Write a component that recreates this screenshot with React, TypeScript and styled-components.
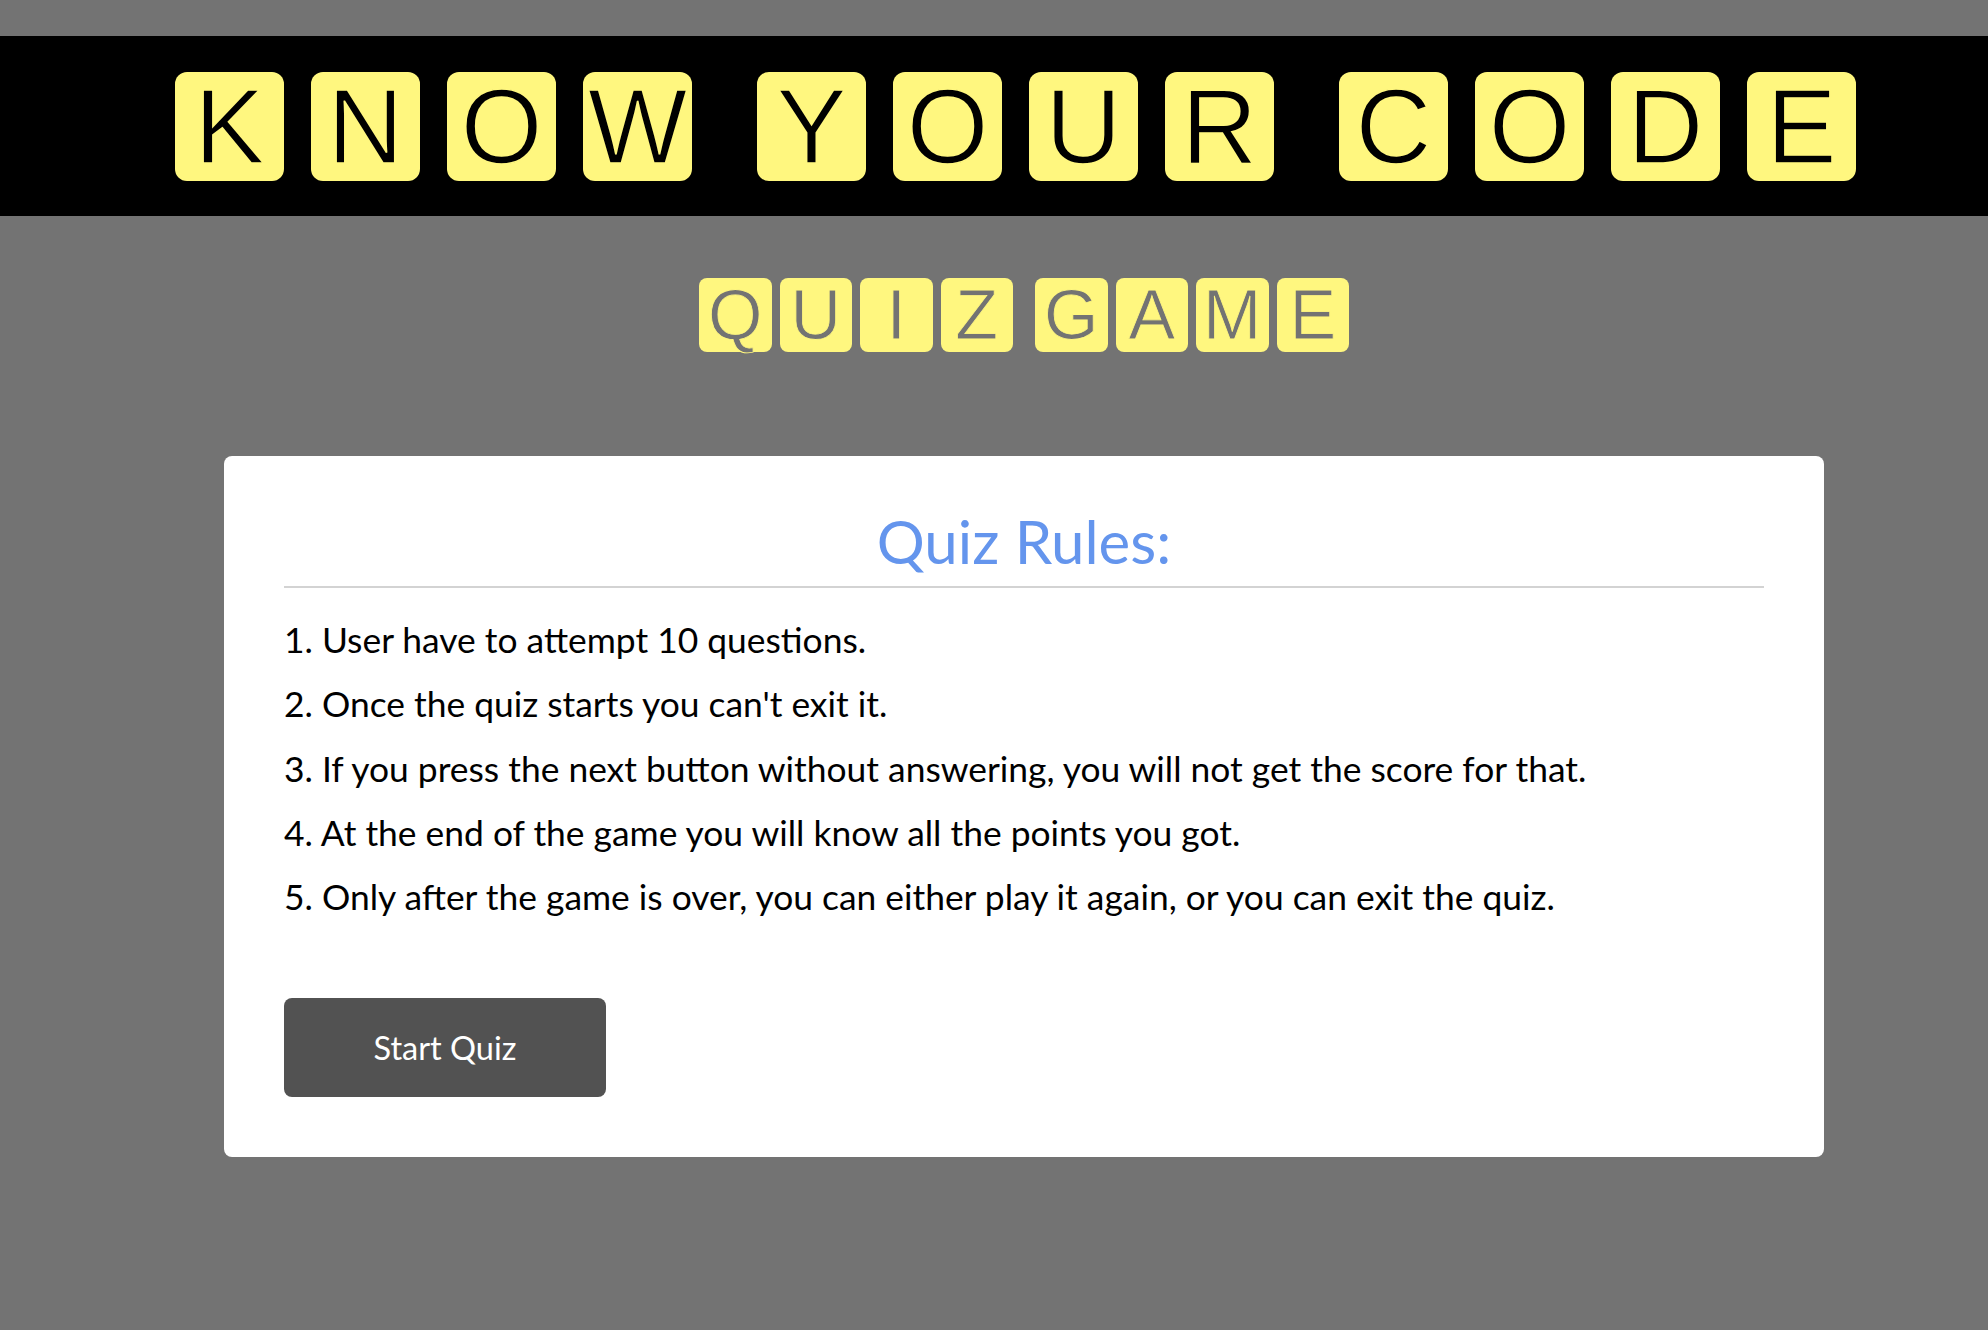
import React from "react";
import styled, { createGlobalStyle } from "styled-components";

const Global = createGlobalStyle`
  html, body {
    margin: 0;
    padding: 0;
    background: #737373;
  }
  #root {
    min-height: 1330px;
  }
  * { box-sizing: border-box; }
`;

const Page = styled.div`
  display: flex;
  flex-direction: column;
  padding-top: 36px;
`;

const Banner = styled.header`
  background: #000;
  height: 180px;
  display: flex;
  align-items: center;
  justify-content: center;
  gap: 65px;
  padding-left: 43px;
`;

const Word = styled.div<{ $gap: number }>`
  display: flex;
  gap: ${(p) => p.$gap}px;
`;

const BigTile = styled.span`
  width: 109px;
  height: 109px;
  border-radius: 12px;
  background: #fff77f;
  color: #000;
  display: flex;
  align-items: center;
  justify-content: center;
  font-family: "Liberation Sans", Arial, sans-serif;
  font-size: 105px;
  line-height: 1;
  -webkit-text-stroke: 1.6px #fff77f;
  paint-order: fill stroke;
`;

const SubTitle = styled.div`
  display: flex;
  justify-content: center;
  gap: 22px;
  margin-top: 62px;
  padding-left: 60px;
`;

const SmallTile = styled.span`
  width: 72.5px;
  height: 74px;
  border-radius: 8px;
  background: #fff77f;
  color: #737373;
  display: flex;
  align-items: center;
  justify-content: center;
  font-family: "Liberation Sans", Arial, sans-serif;
  font-size: 70px;
  line-height: 1;
  -webkit-text-stroke: 0.8px #fff77f;
  paint-order: fill stroke;
`;

const CardRow = styled.div`
  display: flex;
  justify-content: center;
  margin-top: 104px;
  padding-left: 60px;
`;

const Card = styled.section`
  width: 1600px;
  background: #fff;
  border-radius: 8px;
  padding: 49px 60px 60px;
  font-family: Lato, "Open Sans", sans-serif;
`;

const Title = styled.h2`
  margin: 0;
  text-align: center;
  color: #6495ed;
  font-weight: 400;
  font-size: 60px;
  line-height: 72px;
  padding-bottom: 9px;
  border-bottom: 2px solid #d3d3d3;
`;

const Rules = styled.div`
  display: flex;
  flex-direction: column;
  margin-top: 20px;
`;

const Rule = styled.p`
  margin: 0;
  color: #000;
  font-size: 35.4px;
  line-height: 64.35px;
`;

const StartButton = styled.button`
  margin-top: 68px;
  width: 322px;
  height: 99px;
  border: none;
  border-radius: 8px;
  background: #525252;
  color: #fff;
  font-family: Lato, "Open Sans", sans-serif;
  font-size: 32.5px;
  cursor: pointer;
`;

const Tiles = ({ word, gap, Tile }: { word: string; gap: number; Tile: typeof BigTile }) => (
  <Word $gap={gap}>
    {word.split("").map((c, i) => (
      <Tile key={i}>{c}</Tile>
    ))}
  </Word>
);

const rules = [
  "1. User have to attempt 10 questions.",
  "2. Once the quiz starts you can't exit it.",
  "3. If you press the next button without answering, you will not get the score for that.",
  "4. At the end of the game you will know all the points you got.",
  "5. Only after the game is over, you can either play it again, or you can exit the quiz.",
];

export default function App() {
  return (
    <>
      <Global />
      <Page>
        <Banner>
          {["KNOW", "YOUR", "CODE"].map((w) => (
            <Tiles key={w} word={w} gap={27} Tile={BigTile} />
          ))}
        </Banner>
        <SubTitle>
          {["QUIZ", "GAME"].map((w) => (
            <Tiles key={w} word={w} gap={8} Tile={SmallTile} />
          ))}
        </SubTitle>
        <CardRow>
          <Card>
            <Title>Quiz Rules:</Title>
            <Rules>
              {rules.map((r) => (
                <Rule key={r}>{r}</Rule>
              ))}
            </Rules>
            <StartButton>Start Quiz</StartButton>
          </Card>
        </CardRow>
      </Page>
    </>
  );
}
